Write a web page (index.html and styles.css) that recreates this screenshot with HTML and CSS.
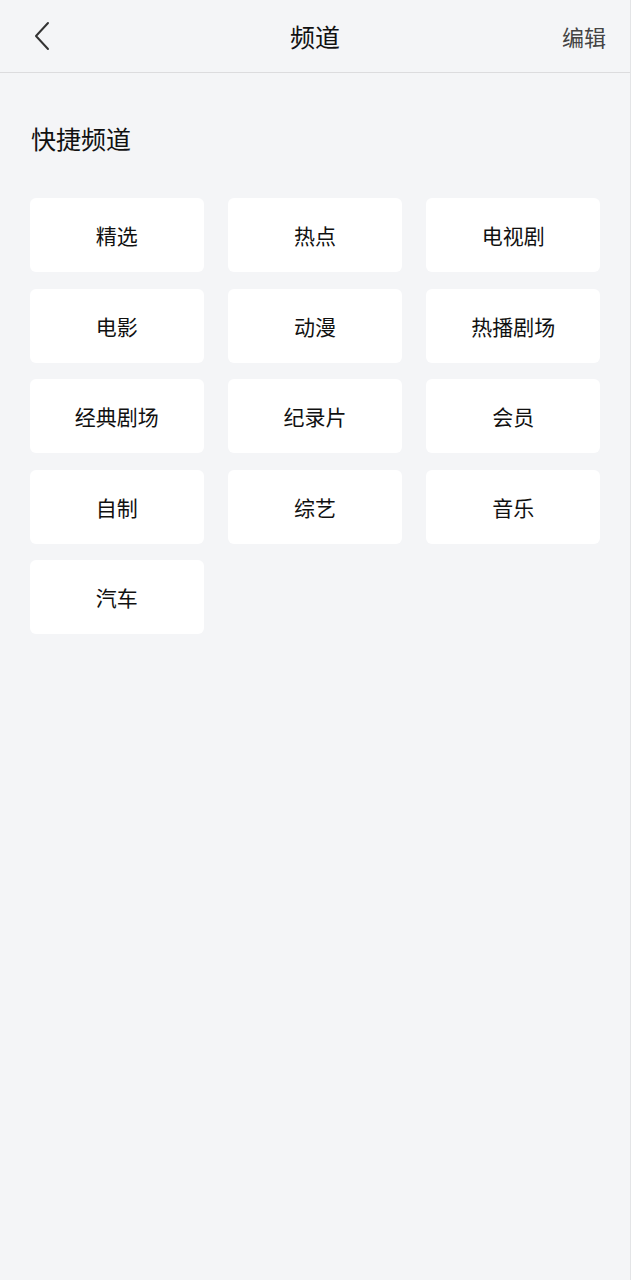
FILE: index.html
```html
<!DOCTYPE html>
<html lang="zh-CN">
<head>
    <meta charset="UTF-8">
    <meta name="viewport" content="width=device-width, initial-scale=1.0">
    <title>频道</title>
    <link rel="stylesheet" href="styles.css">
</head>
<body>
    <div class="header">
        <a class="back" href="#">
            <svg width="18" height="30" viewBox="0 0 18 30">
                <path d="M15 2 L3 15 L15 28" fill="none" stroke="#333" stroke-width="2" stroke-linecap="round" stroke-linejoin="round"/>
            </svg>
        </a>
        <h1>频道</h1>
        <a class="edit" href="#">编辑</a>
    </div>

    <div class="section">
        <h2>快捷频道</h2>
        <div class="channel-grid">
            <div class="channel">精选</div>
            <div class="channel">热点</div>
            <div class="channel">电视剧</div>
            <div class="channel">电影</div>
            <div class="channel">动漫</div>
            <div class="channel">热播剧场</div>
            <div class="channel">经典剧场</div>
            <div class="channel">纪录片</div>
            <div class="channel">会员</div>
            <div class="channel">自制</div>
            <div class="channel">综艺</div>
            <div class="channel">音乐</div>
            <div class="channel">汽车</div>
        </div>
    </div>
</body>
</html>
```

FILE: styles.css
```css
body {
    font-family: "Noto Sans CJK SC", "Noto Sans", sans-serif;
    background-color: #f4f5f7;
    margin: 0;
    color: #111;
    min-height: 1280px;
    border-right: 1px solid #e3e4e6;
    box-sizing: border-box;
}
.header {
    height: 72px;
    border-bottom: 1px solid #dcdcde;
    display: flex;
    align-items: center;
    justify-content: space-between;
    padding: 0 24px 0 33px;
    position: relative;
}
.header .back {
    display: flex;
    align-items: center;
}
.header h1 {
    position: absolute;
    left: 0;
    right: 0;
    margin: 0;
    text-align: center;
    font-size: 25px;
    font-weight: normal;
    pointer-events: none;
}
.header .edit {
    font-size: 22px;
    color: #444;
    text-decoration: none;
}
.section {
    padding: 0 30px;
}
.section h2 {
    margin: 0;
    padding: 47px 0 0 1px;
    font-size: 25px;
    font-weight: normal;
    line-height: 36px;
}
.channel-grid {
    display: grid;
    grid-template-columns: repeat(3, 1fr);
    gap: 16.5px 24.5px;
    margin-top: 42px;
}
.channel {
    height: 74px;
    background-color: #fff;
    border-radius: 6px;
    display: flex;
    align-items: center;
    justify-content: center;
    font-size: 21px;
}
```
